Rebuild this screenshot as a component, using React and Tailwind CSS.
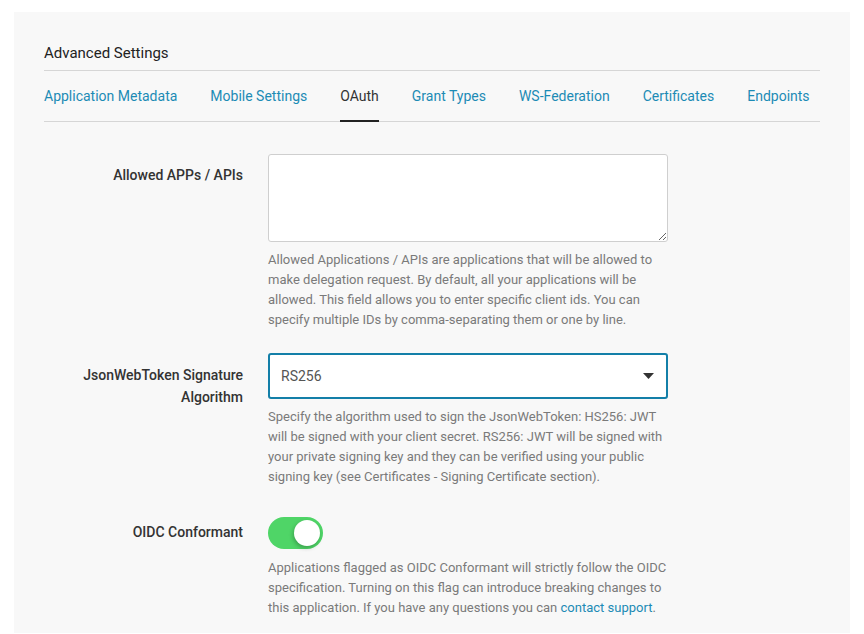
import React, { useState } from 'react';

const tabs = [
  'Application Metadata',
  'Mobile Settings',
  'OAuth',
  'Grant Types',
  'WS-Federation',
  'Certificates',
  'Endpoints',
];

const FieldRow = ({ label, children, labelClass = 'pt-[10px]' }) => (
  <div className="flex">
    <div className={`w-[199px] text-right text-[14px] leading-[22px] font-medium text-[#333] ${labelClass}`}>
      {label}
    </div>
    <div className="ml-[25px] w-[400px]">{children}</div>
  </div>
);

const Help = ({ children, className = '' }) => (
  <p className={`text-[13px] leading-[20px] text-[#7a7a7a] ${className}`}>{children}</p>
);

export default function App() {
  const [oidc, setOidc] = useState(true);

  return (
    <div className="min-h-screen bg-white px-[14px] pt-3" style={{ fontFamily: 'Roboto, "Liberation Sans", sans-serif' }}>
      <div className="h-[621px] bg-[#f8f8f8] px-[30px] pt-[31px]">
        {/* Titolo */}
        <div className="border-b border-[#d6d6d6] pb-[7px]">
          <h1 className="text-[15px] leading-[20px] text-[#222]">Advanced Settings</h1>
        </div>

        {/* Tab */}
        <div className="flex gap-[33px] border-b border-[#d6d6d6]">
          {tabs.map((t) => (
            <div
              key={t}
              className={`py-[15px] text-[14px] leading-[20px] ${
                t === 'OAuth' ? 'text-[#333] border-b-2 border-[#222] -mb-px pb-[14px]' : 'text-[#1c8bb5]'
              }`}
            >
              {t}
            </div>
          ))}
        </div>

        <div className="mt-[32px]">
          <FieldRow label="Allowed APPs / APIs">
            <textarea className="block h-[88px] w-full resize-y rounded-[3px] border border-[#cfcfcf] bg-white" />
            <Help className="mt-[8px]">
              Allowed Applications / APIs are applications that will be allowed to make delegation request. By
              default, all your applications will be allowed. This field allows you to enter specific client ids.
              You can specify multiple IDs by comma-separating them or one by line.
            </Help>
          </FieldRow>
        </div>

        <div className="mt-[23px]">
          <FieldRow label={<>JsonWebToken Signature<br />Algorithm</>} labelClass="pt-[11px]">
            <div className="flex h-[46px] items-center justify-between rounded-[3px] border-2 border-[#137fa8] bg-white pl-[11px] pr-[12px]">
              <span className="text-[14px] text-[#555]">RS256</span>
              <svg width="11" height="6" viewBox="0 0 11 6">
                <path d="M0 0h11L5.5 6z" fill="#333" />
              </svg>
            </div>
            <Help className="mt-[8px]">
              Specify the algorithm used to sign the JsonWebToken: HS256: JWT will be signed with your client
              secret. RS256: JWT will be signed with your private signing key and they can be verified using your
              public signing key (see Certificates - Signing Certificate section).
            </Help>
          </FieldRow>
        </div>

        <div className="mt-[30px]">
          <FieldRow label="OIDC Conformant" labelClass="pt-[4px]">
            <button
              onClick={() => setOidc(!oidc)}
              className={`relative block h-[32px] w-[55px] rounded-full ${oidc ? 'bg-[#4fd567]' : 'bg-[#ddd]'}`}
            >
              <span
                className={`absolute top-[3px] h-[26px] w-[26px] rounded-full bg-white shadow-[-1px_2px_4px_rgba(0,0,0,0.25)] ${
                  oidc ? 'left-[26px]' : 'left-[3px]'
                }`}
              />
            </button>
            <Help className="mt-[9px]">
              Applications flagged as OIDC Conformant will strictly follow the OIDC specification. Turning on this
              flag can introduce breaking changes to this application. If you have any questions you can{' '}
              <a className="text-[#1c8bb5]">contact support</a>.
            </Help>
          </FieldRow>
        </div>
      </div>
    </div>
  );
}
